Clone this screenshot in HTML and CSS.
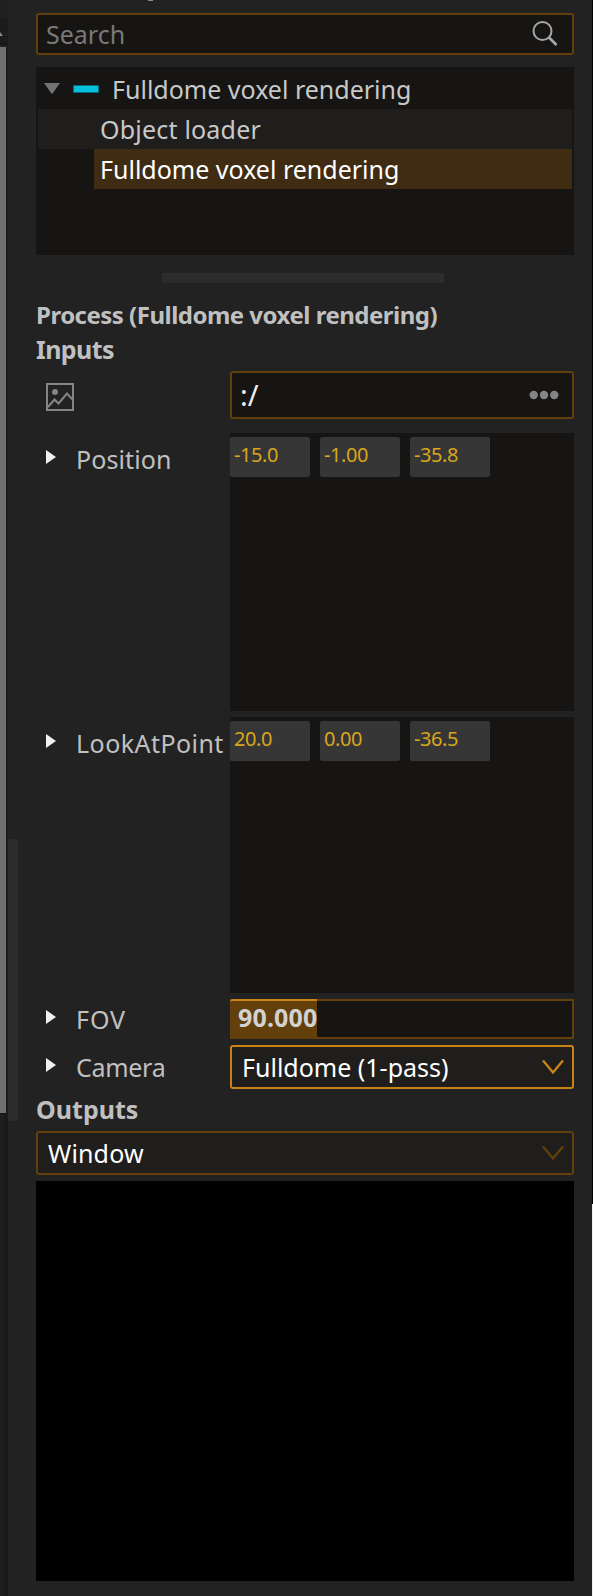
FILE: index.html
```html
<!DOCTYPE html>
<html lang="en">
<head>
<meta charset="utf-8">
<title>Process inspector</title>
<link rel="stylesheet" href="styles.css">
</head>
<body>
<div class="window">
  <div class="scroll-column">
    <div class="scroll-top"><svg width="3" height="5" viewBox="0 0 3 5"><path d="M0 0L3 4H0Z" fill="#8a8a8a"/></svg></div>
    <div class="scroll-thumb"></div>
    <div class="scroll-track"></div>
  </div>
  <div class="side-handle"></div>
  <main class="panel">
    <div class="title-tail"></div>
    <div class="search"><span>Search</span>
      <svg width="28" height="28" viewBox="0 0 28 28" fill="none" stroke="#a6a6a6"><circle cx="11.500" cy="11" r="9" stroke-width="2"/><path d="M17.800 17.300L25.500 25" stroke-width="2.8"/></svg>
    </div>
    <div class="tree">
      <div class="row root"><svg width="56" height="14" viewBox="0 0 56 14"><path d="M0 1H16L8 12.300Z" fill="#737373"/><path d="M29.500 3.500H54.500V10.500H29.500Z" fill="#04c0dd" stroke="#066879"/></svg><span>Fulldome voxel rendering</span></div>
      <div class="row alt"><span class="t-object">Object loader</span></div>
      <div class="row selected"><span>Fulldome voxel rendering</span></div>
    </div>
    <div class="split-handle"></div>
    <h1 class="heading process"><span>Process (Fulldome voxel rendering)</span></h1>
    <h2 class="heading inputs"><span>Inputs</span></h2>
    <div class="grid">
      <div class="label image"><svg width="28" height="28" viewBox="0 0 28 28" fill="none" stroke="#858585" stroke-width="2"><rect x="1" y="1" width="26" height="26"/><circle cx="9" cy="9" r="3" fill="#858585" stroke="none"/><path d="M2 24L8.500 16.500L12.500 20.500L21 10.500L27 17"/></svg></div>
      <div class="path"><span class="t-path">:/</span><svg width="30" height="10" viewBox="0 0 30 10" fill="#858585"><circle cx="4.700" cy="5" r="4.200"/><circle cx="15" cy="5" r="4.200"/><circle cx="25.300" cy="5" r="4.200"/></svg></div>
      <div class="label tall"><i class="arrow"></i><span class="t-position">Position</span></div>
      <div class="vector"><span class="num">-15.0</span><span class="num">-1.00</span><span class="num">-35.8</span></div>
      <div class="label tall"><i class="arrow"></i><span class="t-look">LookAtPoint</span></div>
      <div class="vector"><span class="num">20.0</span><span class="num">0.00</span><span class="num">-36.5</span></div>
      <div class="label"><i class="arrow"></i><span class="t-fov">FOV</span></div>
      <div class="slider"><div class="fill"><span>90.000</span></div></div>
      <div class="label camera"><i class="arrow"></i><span class="t-camera">Camera</span></div>
      <div class="combo active"><span>Fulldome (1-pass)</span><svg width="22" height="15" viewBox="0 0 22 15" fill="none" stroke="#c98414" stroke-width="2.400"><path d="M1 0.500L11 12.500L21 0.500"/></svg></div>
    </div>
    <h2 class="heading outputs"><span>Outputs</span></h2>
    <div class="combo"><span class="t-window">Window</span><svg width="22" height="15" viewBox="0 0 22 15" fill="none" stroke="#623f0b" stroke-width="2.400"><path d="M1 0.500L11 12.500L21 0.500"/></svg></div>
    <div class="preview"></div>
  </main>
  <div class="edge"></div>
</div>
</body>
</html>
```
FILE: styles.css
```css
* { box-sizing: border-box; }
body {
  margin: 0;
  background: #222;
  font-family: "Noto Sans", sans-serif;
  font-size: 25px;
  color: #c8c8c8;
}
svg { display: block; flex: none; }
span { white-space: nowrap; }
.window { position: relative; display: flex; width: 593px; height: 1596px; overflow: hidden; }
.scroll-column { display: flex; flex-direction: column; width: 8px; background: #1c1c1c; }
.scroll-top { height: 47px; padding-top: 32px; background: linear-gradient(#202020 0 18px, #1d1c1a 18px 42px, #181818 42px 45px, #202020 45px); }
.scroll-thumb { width: 6px; height: 1066px; background: #707070; }
.scroll-track { flex: 1; border-right: 4px solid #1a1a1a; border-top: 2px solid #191919; background: #1e1e1e; }
.side-handle { position: absolute; left: 8px; top: 839px; width: 10px; height: 282px; background: #2c2c2c; border-top-right-radius: 2px; }
.panel { flex: 1; padding: 0 18px 0 28px; }
.edge { width: 1px; background: linear-gradient(#000 1204px, #eee 1204px); }
.title-tail { width: 5px; height: 1px; margin: 0 0 12px 112px; background: #8b8b8b; }
.search, .path, .combo {
  display: flex; align-items: center; justify-content: space-between;
  border: 2px solid #623f0b; border-radius: 3px; background: #161513;
}
.search { height: 42px; padding: 0 13px 0 8px; color: #797979; }
.tree { height: 188px; margin-top: 12px; padding: 2px; background: #161513; }
.row { display: flex; align-items: center; height: 40px; }
.root { padding-left: 6px; gap: 12px; }
.alt { padding-left: 62px; background: #1f1e1c; }
.selected { margin-left: 56px; padding-left: 6px; background: #402c12; color: #fff; }
.split-handle { width: 282px; height: 10px; margin: 18px 0 0 126px; background: #2c2c2c; border-bottom-left-radius: 2px; }
.heading { display: flex; align-items: center; margin: 0; font-weight: 700; font-size: 25px; color: #c0c0c0; }
.process { height: 34px; margin: 14px 0 1px; font-size: 24px; letter-spacing: -0.51px; }
.inputs { height: 34px; letter-spacing: -0.6px; }
.grid { display: grid; grid-template-columns: 194px 344px; grid-template-rows: 56px 278px 276px 40px 44px; row-gap: 6px; margin-top: 5px; }
.label { display: flex; align-items: flex-start; color: #c0c0c0; line-height: 40px; }
.image { padding: 12px 0 0 10px; }
.path { height: 48px; padding: 0 13px 0 8px; color: #eee; }
.arrow { width: 0; height: 0; margin: 11px 20px 0 10px; border-left: 10px solid #f0f0f0; border-top: 7px solid transparent; border-bottom: 7px solid transparent; }
.tall { padding-top: 6px; }
.camera { padding-top: 2px; }
.vector { display: flex; align-items: flex-start; gap: 10px; padding-top: 4px; background: #161513; }
.num { width: 80px; height: 40px; padding-left: 4px; border-radius: 2px; background: #363636; color: #d9a61c; font-size: 20px; line-height: 36px; letter-spacing: -0.4px; }
.slider { border: 2px solid #623f0b; background: #161513; }
.fill { width: 87px; height: 40px; margin: -2px; padding-left: 8px; border-top: 2px solid #c98414; border-top-left-radius: 3px; background: #623f0b; color: #d2d2d2; font-weight: 700; line-height: 33px; letter-spacing: 0.15px; }
.combo { height: 44px; padding: 0 8px 0 10px; background: #1f1e1c; color: #fff; }
.active { border-color: #c98414; }
.outputs { height: 42px; padding-bottom: 2px; }
.preview { height: 400px; margin-top: 6px; background: #000; }
.t-path { font-size: 29px; line-height: 40px; }
.t-object { letter-spacing: 0.2px; }
.t-position { letter-spacing: 0.1px; }
.t-look { letter-spacing: 0.45px; }
.t-fov { letter-spacing: 0.9px; }
.t-camera { letter-spacing: -0.3px; }
.t-window { letter-spacing: 0.15px; }
```
